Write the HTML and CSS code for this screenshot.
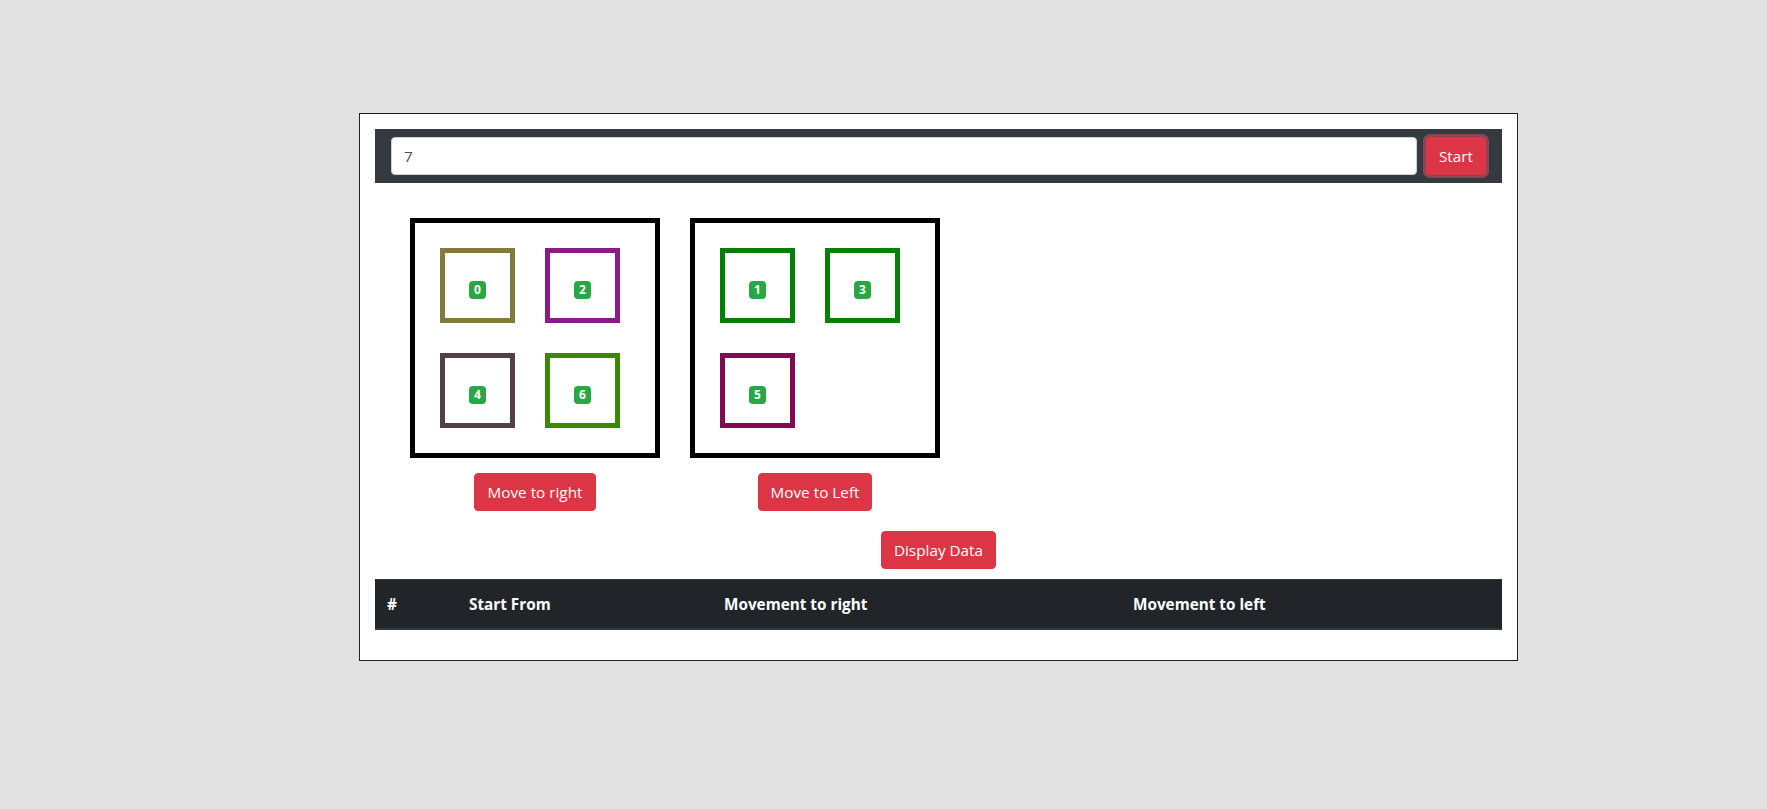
FILE: index.html
```html
<!DOCTYPE html>
<html lang="en">
<head>
<meta charset="utf-8">
<title>Boards</title>
<link rel="stylesheet" href="styles.css">
</head>
<body>
<div class="app">
  <nav class="topbar">
    <input class="num-input" type="text" value="7">
    <button class="btn btn-danger btn-focus">Start</button>
  </nav>

  <div class="boards">
    <div class="board-col">
      <div class="board">
        <div class="cell c-olive"><span class="badge">0</span></div>
        <div class="cell c-purple"><span class="badge">2</span></div>
        <div class="cell c-brown"><span class="badge">4</span></div>
        <div class="cell c-leaf"><span class="badge">6</span></div>
      </div>
      <button class="btn btn-danger">Move to right</button>
    </div>
    <div class="board-col">
      <div class="board">
        <div class="cell c-green"><span class="badge">1</span></div>
        <div class="cell c-green"><span class="badge">3</span></div>
        <div class="cell c-plum"><span class="badge">5</span></div>
      </div>
      <button class="btn btn-danger">Move to Left</button>
    </div>
  </div>

  <div class="center-row">
    <button class="btn btn-danger">Display Data</button>
  </div>

  <table class="data-table">
    <thead>
      <tr>
        <th class="col-num">#</th>
        <th class="col-start">Start From</th>
        <th class="col-right">Movement to right</th>
        <th class="col-left">Movement to left</th>
      </tr>
    </thead>
    <tbody></tbody>
  </table>
</div>
</body>
</html>
```

FILE: styles.css
```css
* { box-sizing: border-box; }

html, body {
  margin: 0;
  padding: 0;
}

body {
  background: #e2e2e2;
  font-family: "Open Sans", "Liberation Sans", sans-serif;
  font-size: 16px;
  line-height: 1.5;
  color: #212529;
}

.app {
  margin: 113px 0 0 359px;
  width: 1159px;
  background: #fff;
  border: 1px solid #222;
  padding: 15px;
}

.topbar {
  display: flex;
  align-items: center;
  background: #343a40;
  padding: 8px 16px;
}

.num-input {
  flex: 1;
  height: 38px;
  margin-right: 9px;
  padding: 6px 12px;
  font-family: inherit;
  font-size: 15.3px;
  line-height: 1.5;
  color: #495057;
  background: #fff;
  border: 1px solid #ced4da;
  border-radius: 4px;
  outline: none;
}

.btn {
  display: inline-block;
  font-family: inherit;
  font-size: 15.3px;
  line-height: 24px;
  padding: 6px 12px;
  border: 1px solid transparent;
  border-radius: 4px;
  cursor: pointer;
}

.btn-danger {
  color: #fff;
  background: #dc3545;
  border-color: #dc3545;
}

.btn-focus {
  box-shadow: 0 0 0 3px rgba(225, 83, 97, 0.5);
}

.boards {
  display: flex;
  gap: 30px;
  padding: 35px 0 0 35px;
}

.board-col {
  display: flex;
  flex-direction: column;
  align-items: center;
  gap: 15px;
}

.board {
  width: 250px;
  height: 240px;
  border: 5px solid #000;
  padding: 10px;
  display: flex;
  flex-wrap: wrap;
  align-content: flex-start;
}

.cell {
  width: 75px;
  height: 75px;
  margin: 15px;
  border: 5px solid #000;
  display: flex;
  justify-content: center;
  align-items: flex-start;
  padding-top: 28px;
}

.c-olive { border-color: #837a40; }
.c-purple { border-color: #8a1a88; }
.c-brown { border-color: #554045; }
.c-leaf { border-color: #3c8806; }
.c-green { border-color: #058005; }
.c-plum { border-color: #820a52; }

.badge {
  display: inline-block;
  background: #28a745;
  color: #fff;
  font-size: 12px;
  font-weight: 700;
  line-height: 1;
  padding: 3px 5px;
  border-radius: 4px;
}

.center-row {
  display: flex;
  justify-content: center;
  margin-top: 20px;
}

.data-table {
  width: 100%;
  margin: 10px 0 15px;
  border-collapse: separate;
  border-spacing: 0;
  table-layout: fixed;
}

.data-table th {
  background: #212529;
  color: #fff;
  text-align: left;
  font-size: 15.3px;
  font-weight: 700;
  padding: 12px;
  line-height: 24px;
  border-top: 1px solid #32383e;
  border-bottom: 2px solid #32383e;
}

.col-num { width: 82px; }
.col-start { width: 255px; }
.col-right { width: 409px; }
```
